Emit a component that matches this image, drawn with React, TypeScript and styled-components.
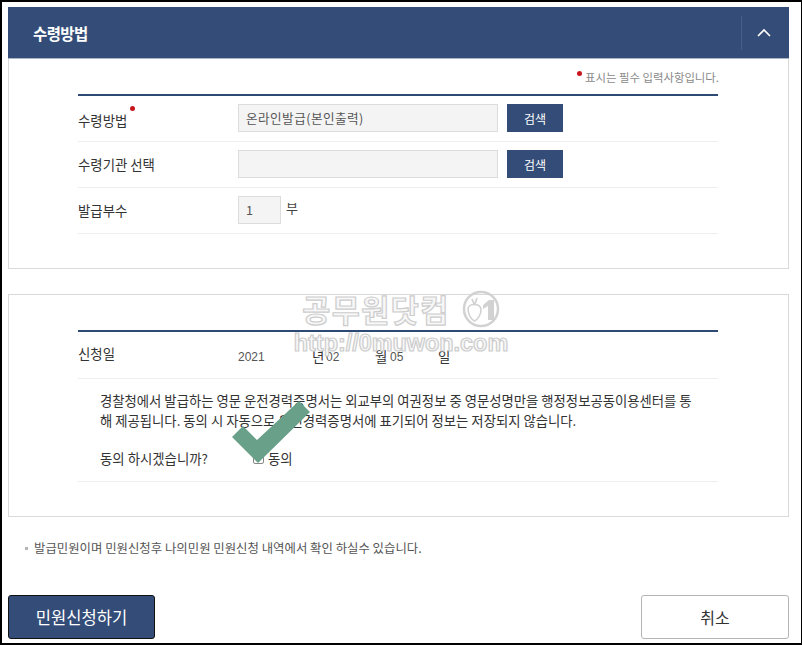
import React from 'react';
import styled, { createGlobalStyle } from 'styled-components';

const Global = createGlobalStyle`
	html, body {
		margin: 0;
		padding: 0;
		background: #fff;
	}
	* {
		box-sizing: border-box;
	}
`

const Frame = styled.div`
	position: relative;
	width: 802px;
	height: 645px;
	padding: 5px 12px 4px 6px;
	border: solid #000;
	border-width: 2px 1px 2px 2px;
	background: #fff;
	overflow: hidden;
	font-family: "Noto Sans CJK KR", "Noto Sans", sans-serif;
	color: #333;
	display: flex;
	flex-direction: column;
`

const Panel = styled.section`
	border: 1px solid #d9d9d9;
	height: ${props => props.$height}px;
	margin-bottom: ${props => props.$gap || 0}px;
	background: #fff;
`

const PanelHeader = styled.header`
	height: 52px;
	margin: -1px -1px 0 -1px;
	background: #344d78;
	border-bottom: 1px solid #a9b5c6;
	display: flex;
	align-items: center;
	justify-content: space-between;
`

const PanelTitle = styled.h2`
	margin: 0 0 0 25px;
	font-size: 15.5px;
	font-weight: 700;
	letter-spacing: -0.6px;
	color: #fff;
`

const Collapse = styled.div`
	width: 44px;
	height: 34px;
	margin-right: 4px;
	border-left: 1px solid #45608a;
	display: flex;
	align-items: center;
	justify-content: center;
`

const RequiredNote = styled.p`
	margin: 0;
	height: 35px;
	padding: 9px 69px 0 0;
	text-align: right;
	font-size: 11.4px;
	line-height: 18px;
	color: #8a8a8a;
`

const Dot = styled.i`
	display: inline-block;
	width: 5px;
	height: 5px;
	border-radius: 50%;
	background: #c8161d;
	vertical-align: ${props => props.$up}px;
	margin: 0 ${props => props.$right || 0}px 0 ${props => props.$left || 0}px;
`

const Table = styled.div`
	margin: ${props => props.$top || 0}px 70px 0 69px;
	border-top: 2px solid #2d4a74;
`

const Row = styled.div`
	display: flex;
	align-items: center;
	height: ${props => props.$height || 46}px;
	border-bottom: 1px solid #eeeeee;
	padding-bottom: 1px;
`

const Label = styled.div`
	width: 160px;
	flex: none;
	margin-top: ${props => props.$lift ? -3 : 0}px;
	font-size: 13.4px;
	color: #333;
	white-space: nowrap;
`

const Field = styled.div`
	width: ${props => props.$width || 260}px;
	height: 28px;
	background: #f4f4f4;
	border: 1px solid #dcdcdc;
	font-size: 12.6px;
	line-height: 26px;
	padding-left: 7px;
	letter-spacing: 0.45px;
	color: #555;
`

const SearchButton = styled.button`
	width: 56px;
	height: 28px;
	margin-left: 9px;
	padding: 0;
	border: none;
	background: #344d78;
	color: #fff;
	font-family: inherit;
	font-size: 12px;
`

const Unit = styled.span`
	margin: -5px 0 0 5px;
	font-size: 13px;
	color: #444;
`

const DateRow = styled.div`
	display: flex;
	align-items: center;
	padding-top: 2px;
	color: #333;
`

const DateValue = styled.span`
	width: ${props => props.$width}px;
	font-family: "Liberation Sans", sans-serif;
	font-size: 12px;
	color: #555;
	padding-top: 2px;
`

const DateUnit = styled.span`
	width: ${props => props.$width}px;
	font-size: 13.4px;
`

const Agreement = styled.p`
	margin: 0;
	height: 54px;
	padding: 12px 26px 0 22px;
	font-size: 13.35px;
	line-height: 20px;
	color: #333;
`

const Consent = styled.div`
	display: flex;
	align-items: center;
	height: 49px;
	padding: 2px 0 0 22px;
	border-bottom: 1px solid #eeeeee;
	font-size: 13.4px;
`

const ConsentLabel = styled.span`
	width: 153px;
	flex: none;
`

const Checkbox = styled.span`
	width: 11px;
	height: 11px;
	margin-right: 4px;
	border: 1px solid #888;
	border-radius: 2px;
	background: #fff;
`

const Note = styled.p`
	margin: 0;
	height: 78px;
	padding: 21px 0 0 17px;
	font-size: 12.4px;
	line-height: 20px;
	color: #555;
	&::before {
		content: "";
		display: inline-block;
		width: 3px;
		height: 3px;
		margin-right: 6px;
		vertical-align: 3px;
		background: #b5b5b5;
	}
`

const Actions = styled.div`
	display: flex;
	justify-content: space-between;
`

const ActionButton = styled.button`
	width: ${props => props.$primary ? 147 : 148}px;
	height: 44px;
	padding: 0;
	border: ${props => props.$primary ? '1px solid #111' : '1px solid #b5b5b5'};
	border-radius: 3px;
	background: ${props => props.$primary ? '#344d78' : '#fff'};
	color: ${props => props.$primary ? '#fff' : '#333'};
	font-family: inherit;
	font-size: ${props => props.$primary ? 16.6 : 16}px;
`

const Watermark = styled.div`
	position: absolute;
	left: 289px;
	top: 287px;
	width: 220px;
	pointer-events: none;
	text-align: center;
`

const WatermarkTitle = styled.div`
	display: flex;
	align-items: center;
	justify-content: center;
	gap: 12px;
	height: 40px;
	font-size: 30.5px;
	font-weight: 700;
	letter-spacing: 1.4px;
	color: #f7f7f7;
	-webkit-text-stroke: 1.2px #cdcdcd;
`

const WatermarkLink = styled.div`
	margin-top: 1px;
	font-family: "Liberation Sans", sans-serif;
	font-size: 23.4px;
	line-height: 26px;
	font-weight: 700;
	white-space: nowrap;
	color: #f7f7f7;
	-webkit-text-stroke: 1.2px #cdcdcd;
`

const CheckMark = styled.svg`
	position: absolute;
	left: 228px;
	top: 396px;
	pointer-events: none;
`

const App = () => {
	return (
		<Frame>
			<Global />
			<Panel $height={262} $gap={25}>
				<PanelHeader>
					<PanelTitle>수령방법</PanelTitle>
					<Collapse>
						<svg width="14" height="9" viewBox="0 0 14 9" fill="none">
							<path d="M1 8 L7 2 L13 8" stroke="#fff" strokeWidth="1.6" />
						</svg>
					</Collapse>
				</PanelHeader>
				<RequiredNote><Dot $up={6} $right={3} />표시는 필수 입력사항입니다.</RequiredNote>
				<Table>
					<Row>
						<Label>수령방법<Dot $up={15} $left={3} /></Label>
						<Field>온라인발급(본인출력)</Field>
						<SearchButton>검색</SearchButton>
					</Row>
					<Row>
						<Label>수령기관 선택</Label>
						<Field />
						<SearchButton>검색</SearchButton>
					</Row>
					<Row>
						<Label>발급부수</Label>
						<Field $width={43}>1</Field>
						<Unit>부</Unit>
					</Row>
				</Table>
			</Panel>
			<Panel $height={223}>
				<Table $top={35}>
					<Row $height={47}>
						<Label $lift>신청일</Label>
						<DateRow>
							<DateValue $width={74}>2021</DateValue>
							<DateUnit $width={14}>년</DateUnit>
							<DateValue $width={49}>02</DateValue>
							<DateUnit $width={15}>월</DateUnit>
							<DateValue $width={48}>05</DateValue>
							<DateUnit $width={15}>일</DateUnit>
						</DateRow>
					</Row>
					<Agreement>
						경찰청에서 발급하는 영문 운전경력증명서는 외교부의 여권정보 중 영문성명만을 행정정보공동이용센터를 통해 제공됩니다. 동의 시 자동으로 운전경력증명서에 표기되어 정보는 저장되지 않습니다.
					</Agreement>
					<Consent>
						<ConsentLabel>동의 하시겠습니까?</ConsentLabel>
						<Checkbox />
						동의
					</Consent>
				</Table>
			</Panel>
			<Note>발급민원이며 민원신청후 나의민원 민원신청 내역에서 확인 하실수 있습니다.</Note>
			<Actions>
				<ActionButton $primary>민원신청하기</ActionButton>
				<ActionButton>취소</ActionButton>
			</Actions>
			<Watermark>
				<WatermarkTitle>
					공무원닷컴
					<svg width="38" height="38" viewBox="0 0 38 38" fill="none">
						<circle cx="19" cy="19" r="17" stroke="#d2d2d2" strokeWidth="2.5" />
						<path d="M6 19 C6 13 18 13 19 19 C19.5 25 15 30 12.5 31 C10 30 6 25 6 19 Z" fill="#fff" stroke="#d2d2d2" strokeWidth="1.6" />
						<path d="M12.5 15 L10 9 M12.5 15 L15 8" stroke="#d2d2d2" strokeWidth="1.8" />
						<path d="M21 15 L27 10 L32 10 L32 30 L26 30 L26 16 L21 19 Z" fill="#d2d2d2" />
					</svg>
				</WatermarkTitle>
				<WatermarkLink>http://0muwon.com</WatermarkLink>
			</Watermark>
			<CheckMark width="84" height="72" viewBox="0 0 84 72">
				<path d="M2 39 L13 28 L27 42 L69 3 L80 14 L28 65 Z" fill="#68a08a" />
			</CheckMark>
		</Frame>
	)
}

export default App
